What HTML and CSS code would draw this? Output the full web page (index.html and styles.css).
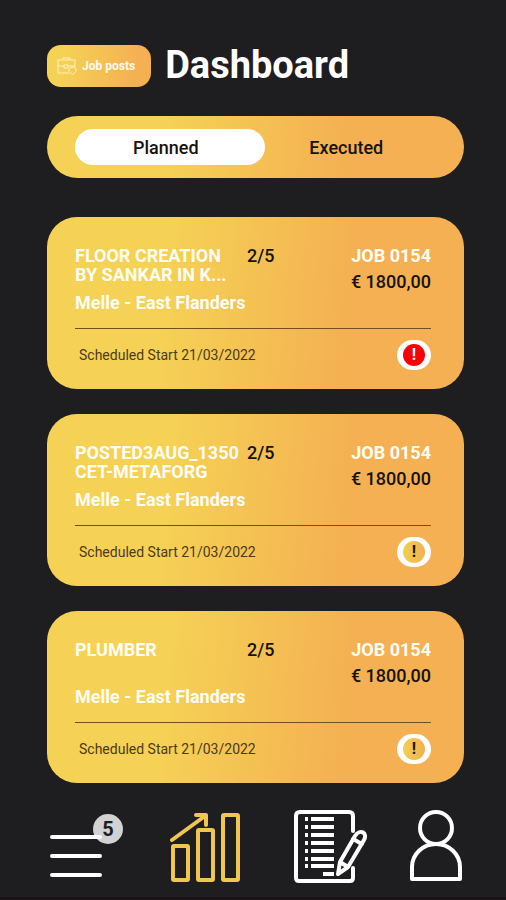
FILE: index.html
```html
<!DOCTYPE html>
<html lang="en">
<head>
<meta charset="utf-8">
<meta name="viewport" content="width=device-width, initial-scale=1">
<title>Dashboard</title>
<link rel="stylesheet" href="styles.css">
</head>
<body>
<div class="app">
  <header class="header">
    <button class="job-posts" type="button">
      <svg class="job-icon" viewBox="0 0 20 20" aria-hidden="true">
        <path d="M6 4V2h7v2M12 17H1V4h17v7M1 10h6m4 0h7M7 9h4v3H7zM12 12.500l3.500-1.500 3.500 1.500v3l-3.500 3-3.500-3z"/>
      </svg>
      <span>Job posts</span>
    </button>
    <h1 class="title">Dashboard</h1>
  </header>

  <div class="tabs" role="tablist">
    <button class="tab tab-active" type="button" role="tab" aria-selected="true">Planned</button>
    <button class="tab" type="button" role="tab" aria-selected="false">Executed</button>
  </div>

  <main class="cards">
    <article class="card">
      <div class="card-top">
        <h2 class="job-name">FLOOR CREATION<br>BY SANKAR IN K...</h2>
        <span class="count">2/5</span>
        <div class="job-meta"><span class="job-id">JOB 0154</span><span class="price">€ 1800,00</span></div>
        <p class="place">Melle - East Flanders</p>
      </div>
      <div class="card-bottom">
        <span class="date">Scheduled Start 21/03/2022</span>
        <span class="status"><span class="mark mark-alert">!</span></span>
      </div>
    </article>
    <article class="card">
      <div class="card-top">
        <h2 class="job-name">POSTED3AUG_1350<br>CET-METAFORG</h2>
        <span class="count">2/5</span>
        <div class="job-meta"><span class="job-id">JOB 0154</span><span class="price">€ 1800,00</span></div>
        <p class="place">Melle - East Flanders</p>
      </div>
      <div class="card-bottom">
        <span class="date">Scheduled Start 21/03/2022</span>
        <span class="status"><span class="mark">!</span></span>
      </div>
    </article>
    <article class="card">
      <div class="card-top">
        <h2 class="job-name">PLUMBER</h2>
        <span class="count">2/5</span>
        <div class="job-meta"><span class="job-id">JOB 0154</span><span class="price">€ 1800,00</span></div>
        <p class="place">Melle - East Flanders</p>
      </div>
      <div class="card-bottom">
        <span class="date">Scheduled Start 21/03/2022</span>
        <span class="status"><span class="mark">!</span></span>
      </div>
    </article>
  </main>

  <nav class="nav">
    <a class="nav-link" href="#menu" aria-label="Menu">
      <span class="badge">5</span>
      <svg class="menu-icon" width="80" height="76" viewBox="0 0 80 76" aria-hidden="true">
        <path class="line" d="M5 29h48M5 48h48M5 67h48"/>
      </svg>
    </a>
    <a class="nav-link" href="#statistics" aria-label="Statistics">
      <svg width="72" height="76" viewBox="0 0 72 76" aria-hidden="true">
        <g class="line line-gold">
          <rect x="3" y="38" width="15" height="34" rx="1"/>
          <rect x="28" y="22" width="15" height="50" rx="1"/>
          <rect x="53" y="7" width="15" height="65" rx="1"/>
          <path d="M2 32L35 8M26 7h10v10"/>
        </g>
      </svg>
    </a>
    <a class="nav-link nav-planning" href="#planning" aria-label="Planning">
      <svg width="74" height="76" viewBox="0 0 74 76" aria-hidden="true">
        <g class="line">
          <path d="M60 23V8q0-4-4-4H7Q3 4 3 8v62q0 3 3 3h51q3 0 3-3V60"/>
          <path d="M45 66l2-12 15-26c5-8 13-3 9 4L55 59zM47 54l8 5M60 31l9 5"/>
          <path class="list" d="M12 11h3M12 19h3M12 27h3M12 35h3M12 43h3M12 51h3M12 58h3"/>
          <path class="list" d="M18 11h23M18 19h23M18 27h23M18 35h23M18 43h23M18 51h23M18 58h23M30 66h11"/>
        </g>
      </svg>
    </a>
    <a class="nav-link" href="#profile" aria-label="Profile">
      <svg width="54" height="76" viewBox="0 0 54 76" aria-hidden="true">
        <g class="line">
          <circle cx="26" cy="20" r="16"/>
          <path d="M2 71V59a24 23 0 0 1 48 0v12z"/>
        </g>
      </svg>
    </a>
  </nav>
</div>
</body>
</html>
```
FILE: styles.css
```css
* {
  box-sizing: border-box;
}

body {
  margin: 0;
  background: #1e1e20;
  color: #17130a;
  font-family: Roboto, "Liberation Sans", sans-serif;
}

h1, h2, p {
  margin: 0;
}

button {
  border: 0;
  font-family: inherit;
  cursor: pointer;
}

.app {
  min-height: 100vh;
  padding: 42px 42px 0 47px;
  border-bottom: 3px solid #1c1318;
}

.header {
  display: flex;
  align-items: center;
  gap: 14px;
  height: 48px;
}

.job-posts {
  display: flex;
  align-items: center;
  gap: 5px;
  height: 42px;
  padding: 0 16px 0 10px;
  border-radius: 14px;
  background: linear-gradient(100deg, #f5d255 15%, #f4b052 85%);
  color: #fffbed;
  font-size: 12px;
  font-weight: 700;
}

.job-icon {
  width: 20px;
  height: 20px;
  fill: none;
  stroke: #fff0bd;
  stroke-width: 1;
}

.title {
  color: #fff;
  font-size: 38px;
  line-height: 46px;
  height: 48px;
  font-weight: 700;
}

.tabs {
  display: flex;
  margin-top: 26px;
  padding: 13px 28px;
  border-radius: 31px;
  background: linear-gradient(95deg, #f5d255 28%, #f4b052 72%);
}

.tab {
  height: 36px;
  flex: 171;
  padding: 0 8px 0 0;
  border-radius: 18px;
  background: transparent;
  color: #17130a;
  font-size: 18px;
  font-weight: 500;
}

.tab-active {
  flex: 190;
  background: #fff;
}

.cards {
  display: grid;
  gap: 25px;
  margin-top: 39px;
}

.card {
  padding: 29px 33px 19px 28px;
  border-radius: 30px;
  background: linear-gradient(95deg, #f5d255 28%, #f4b052 72%);
}

.card-top {
  display: grid;
  grid-template-columns: 172px 1fr auto;
  grid-template-rows: 38px 20px;
  row-gap: 9px;
  padding-bottom: 15px;
  border-bottom: 1px solid #70501f;
  font-size: 18px;
  line-height: 19px;
  font-weight: 700;
}

.job-name {
  color: #fffdf4;
  font-size: 18px;
  font-weight: 700;
  white-space: nowrap;
}

.job-meta {
  display: grid;
  align-content: start;
  gap: 7px;
  text-align: right;
}

.job-id {
  color: #fffdf4;
}

.count,
.price {
  font-weight: 500;
}

.place {
  grid-column: 1 / -1;
  color: #fffdf4;
}

.card-bottom {
  display: flex;
  align-items: center;
  justify-content: space-between;
  margin-top: 11px;
  padding-left: 4px;
}

.date {
  color: #4d3a18;
  font-size: 14px;
}

.status {
  display: grid;
  place-items: center;
  width: 34px;
  height: 30px;
  border-radius: 15px;
  background: #fff;
}

.mark {
  display: grid;
  place-items: center;
  width: 22px;
  height: 22px;
  border-radius: 50%;
  background: linear-gradient(90deg, #f0d04e, #f4b052);
  font-size: 16px;
  line-height: 22px;
  font-weight: 700;
}

.mark-alert {
  background: #fb0007;
  color: #fff;
}

.nav {
  display: flex;
  justify-content: space-between;
  margin-top: 25px;
}

.nav-link {
  position: relative;
  display: block;
  height: 76px;
}

.nav-planning {
  margin-left: 8px;
}

.menu-icon {
  position: relative;
}

.line {
  fill: none;
  stroke: #fff;
  stroke-width: 4;
  stroke-linecap: round;
  stroke-linejoin: round;
}

.line-gold {
  stroke: #efc650;
}

.list {
  stroke-linecap: butt;
}

.badge {
  position: absolute;
  top: 6px;
  right: 4px;
  width: 30px;
  height: 30px;
  border-radius: 50%;
  background: #d2d2d2;
  color: #1e1e20;
  font-size: 20px;
  line-height: 30px;
  font-weight: 700;
  text-align: center;
}
```
